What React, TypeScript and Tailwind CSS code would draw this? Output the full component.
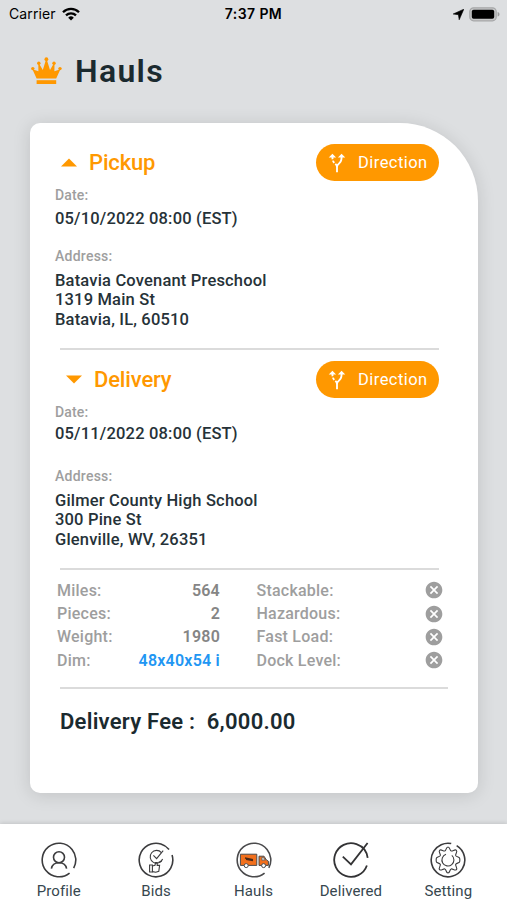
import React from 'react'
import { MdAltRoute, MdCancel } from 'react-icons/md'

const MILES_INFO = [
  { label: 'Miles:', value: '564' },
  { label: 'Pieces:', value: '2' },
  { label: 'Weight:', value: '1980' },
  { label: 'Dim:', value: '48x40x54 i', isLink: true },
]

const FLAGS = ['Stackable:', 'Hazardous:', 'Fast Load:', 'Dock Level:']

// circle with a small gap, angles in degrees, clockwise from the right
const Ring = ({ from, gap }: { from: number; gap: number }) => (
  <circle
    cx="18"
    cy="18"
    r="16.8"
    pathLength="360"
    strokeDasharray={`${360 - gap} ${gap}`}
    transform={`rotate(${from} 18 18)`}
  />
)

const ProfileIcon = () => (
  <svg width="36" height="36" viewBox="0 0 36 36" fill="none" stroke="#3c3c3e" strokeWidth="1.6">
    <Ring from={51} gap={22} />
    <circle cx="18" cy="15.2" r="5.5" />
    <path d="M10.4 26.6C11 23 14 20.7 18 20.7S25 23 25.6 26.6" />
  </svg>
)

const BidsIcon = () => (
  <svg width="36" height="36" viewBox="0 0 36 36" fill="none" stroke="#3c3c3e" strokeWidth="1.6">
    <Ring from={-17} gap={22} />
    <g strokeWidth="1.1">
      <path d="M23.4 10.6A6.4 6.4 0 1 0 24.6 17" />
      <path d="M15.4 13.4l3.2 3.2 6.6-8" />
      <path d="M11.6 23h2.8v7h-2.8z" />
      <path d="M14.4 24l2.6-.8.6-2.6h1.6v2.8h2.4l-.8 6-3 .8-3.4-.6" />
      <path d="M20.6 20.4a6.3 6.3 0 0 0 3-1.8" />
    </g>
  </svg>
)

const TruckIcon = () => (
  <svg width="36" height="36" viewBox="0 0 36 36" fill="none">
    <g stroke="#4a4a4c" strokeWidth="1.6">
      <Ring from={51} gap={23} />
    </g>
    <path d="M4.4 12.2h16.4v11.2H4.4z" fill="#f2701d" stroke="#4a4a4c" />
    <path d="M9 16l8 1.6M10 17.4l7 1.2" stroke="#4a2a1a" strokeWidth="1.3" />
    <path d="M23 14.2h5l2.4 3.8 2 1.2v4.2H23z" fill="#f2701d" stroke="#4a4a4c" />
    <path d="M25.8 15.4h1.8l1.6 2.8h-3.4z" fill="#c9d2d6" stroke="#4a4a4c" strokeWidth=".6" />
    <circle cx="10.2" cy="23.6" r="2" fill="#fff" stroke="#4a4a4c" />
    <circle cx="27.6" cy="23.6" r="2" fill="#fff" stroke="#4a4a4c" />
  </svg>
)

const DeliveredIcon = () => (
  <svg width="36" height="36" viewBox="0 0 36 36" fill="none" stroke="#333335" strokeWidth="1.8">
    <Ring from={19} gap={26} />
    <path d="M9.8 14.6l8.2 7.8L34.6 1" />
  </svg>
)

const SettingIcon = () => (
  <svg width="36" height="36" viewBox="0 0 36 36" fill="none" stroke="#3c3c3e" strokeWidth="1.6">
    <Ring from={-59} gap={20} />
    <g strokeWidth="1.1" strokeLinejoin="round">
      <path
        transform="translate(0 .8)"
        d="M14.9 8.2C16.4 7.8 15.8 4.2 18 4.2s1.6 3.6 3.1 4c1.6.6 3.8-2.2 5.3-.7s-1.3 3.7-.7 5.3c.5 1.5 4.1 1 4.1 3.2v2.4c0 2.2-3.6 1.6-4.1 3.1-.6 1.6 2.2 3.8.7 5.3s-3.7-1.3-5.3-.7c-1.5.5-.9 4.1-3.1 4.1s-1.6-3.6-3.1-4.1c-1.6-.6-3.8 2.2-5.3.7s1.3-3.7.7-5.3C9.8 20 6.2 20.6 6.2 18.4V16c0-2.2 3.6-1.7 4.1-3.2.6-1.6-2.2-3.8-.7-5.3s3.7 1.3 5.3.7z"
      />
      <path d="M21.8 13.4A6 6 0 1 1 16 12.3" />
    </g>
  </svg>
)

const NAV_ITEMS = [
  { label: 'Profile', icon: ProfileIcon },
  { label: 'Bids', icon: BidsIcon },
  { label: 'Hauls', icon: TruckIcon },
  { label: 'Delivered', icon: DeliveredIcon },
  { label: 'Setting', icon: SettingIcon },
]

const StatusBar = () => (
  <div className="grid h-7 grid-cols-3 items-center px-[7px] font-['Inter',sans-serif] text-sm text-black">
    <div className="flex items-center gap-[6px] pl-[2px]">
      <span className="tracking-[0.1px]">Carrier</span>
      <svg width="18" height="14" viewBox="0 0 18 14" fill="none" stroke="#000" strokeWidth="2.3">
        <path d="M1 5.2a11.4 11.4 0 0 1 16 0" />
        <path d="M4 8.4a7.1 7.1 0 0 1 10 0" />
        <path d="M9 13.6L6.2 10.7a4 4 0 0 1 5.6 0z" fill="#000" stroke="none" />
      </svg>
    </div>
    <span className="text-center font-semibold tracking-[0.4px]">7:37 PM</span>
    <div className="flex items-center justify-end gap-[5px]">
      <svg width="11" height="11" viewBox="0 0 11 11">
        <path d="M10.8.2L6.2 10.8 5.4 5.7.2 5z" fill="#000" stroke="#000" strokeWidth=".6" strokeLinejoin="round" />
      </svg>
      <svg width="31" height="15" viewBox="0 0 31 15">
        <rect x=".8" y=".8" width="26.4" height="13" rx="3.8" fill="#c6c7c8" stroke="#a6a7a8" strokeWidth="1.2" />
        <rect x="2.8" y="2.8" width="22.4" height="9" rx="1.8" fill="#000" />
        <path d="M28.6 5v4.6c1.2-.4 1.9-1.2 1.9-2.3s-.7-1.9-1.9-2.3z" fill="#9b9c9d" />
      </svg>
    </div>
  </div>
)

const Crown = () => (
  <svg width="31" height="27" viewBox="0 0 31 27" fill="#ff9800">
    <circle cx="1.8" cy="11.6" r="1.7" />
    <circle cx="7.8" cy="6.3" r="1.7" />
    <circle cx="15.4" cy="2.2" r="1.9" />
    <circle cx="23" cy="6.3" r="1.7" />
    <circle cx="29" cy="11.6" r="1.7" />
    <path d="M1.4 12.3l6 2L7.3 7h1l3.5 6L14.9 3h1L19 13l3.5-6h1l-.1 7.3 6-2-4.2 9.3H5.6z" />
    <path d="M5.6 23.2h19.6V27H5.6z" />
  </svg>
)

const DirectionButton = () => (
  <button className="flex h-[37px] w-[123px] items-center rounded-full bg-[#ff9800] pl-[10px] text-white">
    <MdAltRoute size={22} />
    <span className="ml-[10px] text-[16.5px] font-normal tracking-[0.45px]">Direction</span>
  </button>
)

type StopProps = {
  title: string
  isOpen?: boolean
  date: string
  address: string[]
}

const Stop = ({ title, isOpen, date, address }: StopProps) => (
  <section className="text-[16.5px] font-medium leading-5 tracking-[0.18px] text-[#263238]">
    <div className={`flex h-[37px] items-center ${isOpen ? 'pl-[6px]' : 'pl-[11px]'}`}>
      <svg width="16" height="9" viewBox="0 0 16 9" fill="#ff9800">
        <path d={isOpen ? 'M0 8.6h16L8 .4z' : 'M0 .4h16L8 8.6z'} />
      </svg>
      <h2 className="ml-[12px] flex-1 pt-px text-[22px] tracking-[-0.15px] text-[#ff9800]">{title}</h2>
      <DirectionButton />
    </div>
    <p className="mt-[4px] text-sm leading-5 tracking-[0.15px] text-[#9e9e9e]">Date:</p>
    <p className={isOpen ? 'mt-[4px]' : 'mt-[2px]'}>{date}</p>
    <p className={`text-sm leading-5 tracking-[0.25px] text-[#9e9e9e] ${isOpen ? 'mt-[17px]' : 'mt-[22px]'}`}>
      Address:
    </p>
    <div className="mt-[4.5px] leading-[19.6px]">
      {address.map((line) => (
        <p key={line}>{line}</p>
      ))}
    </div>
  </section>
)

export default function App() {
  return (
    <div className="flex h-[900px] w-[507px] flex-col overflow-hidden bg-[#dddfe1] font-['Roboto',sans-serif]">
      <StatusBar />
      <header className="flex h-[85px] items-center pl-[31px]">
        <Crown />
        <h1 className="ml-[13px] text-[32px] font-semibold leading-none tracking-[1.3px] text-[#1b2a2f]">Hauls</h1>
      </header>

      <main className="ml-[30px] mt-[10px] h-[670px] w-[448px] shrink-0 rounded-[10px] rounded-tr-[78px] bg-white pl-[25px] pr-[39px] pt-[21px] shadow-[0_2px_18px_rgba(0,0,0,0.13)]">
        <Stop
          title="Pickup"
          isOpen
          date="05/10/2022 08:00 (EST)"
          address={['Batavia Covenant Preschool', '1319 Main St', 'Batavia, IL, 60510']}
        />
        <div className="ml-[5px] mt-[18.7px] h-[2px] bg-[#dbdbdb]" />
        <div className="h-[11.4px]" />
        <Stop
          title="Delivery"
          date="05/11/2022 08:00 (EST)"
          address={['Gilmer County High School', '300 Pine St', 'Glenville, WV, 26351']}
        />
        <div className="ml-[5px] mt-[18.1px] h-[2px] bg-[#dbdbdb]" />

        <div className="-mr-[4px] ml-[2px] mt-[9px] flex text-base font-medium leading-[23.3px] tracking-[0.23px] text-[#9e9e9e]">
          <div className="w-[163px]">
            {MILES_INFO.map((item) => (
              <div key={item.label} className="flex justify-between">
                <span>{item.label}</span>
                <span className={item.isLink ? 'font-semibold text-[#2196f3]' : 'font-semibold text-[#858585]'}>
                  {item.value}
                </span>
              </div>
            ))}
          </div>
          <div className="ml-[36.5px] flex-1">
            {FLAGS.map((flag) => (
              <div key={flag} className="flex items-center justify-between">
                <span>{flag}</span>
                <MdCancel size={20} className="-mr-[1px]" />
              </div>
            ))}
          </div>
        </div>
        <div className="-mr-[9px] ml-[5px] mt-[15px] h-[2px] bg-[#dbdbdb]" />
        <p className="ml-[5px] mt-[18px] whitespace-pre text-[22px] font-semibold leading-[29px] tracking-[0.25px] text-[#1b2a2f]">
          Delivery Fee :  6,000.00
        </p>
      </main>

      <nav className="mt-auto flex h-[76px] shrink-0 bg-white px-[10px] pt-[18px] shadow-[0_-1px_4px_rgba(0,0,0,0.12)]">
        {NAV_ITEMS.map((item) => (
          <div key={item.label} className="flex flex-1 flex-col items-center">
            <div className="h-9 w-9 shrink-0">
              <item.icon />
            </div>
            <span className="mt-[3px] text-[15px] leading-5 tracking-[0.1px] text-[#37474f]">{item.label}</span>
          </div>
        ))}
      </nav>
    </div>
  )
}
